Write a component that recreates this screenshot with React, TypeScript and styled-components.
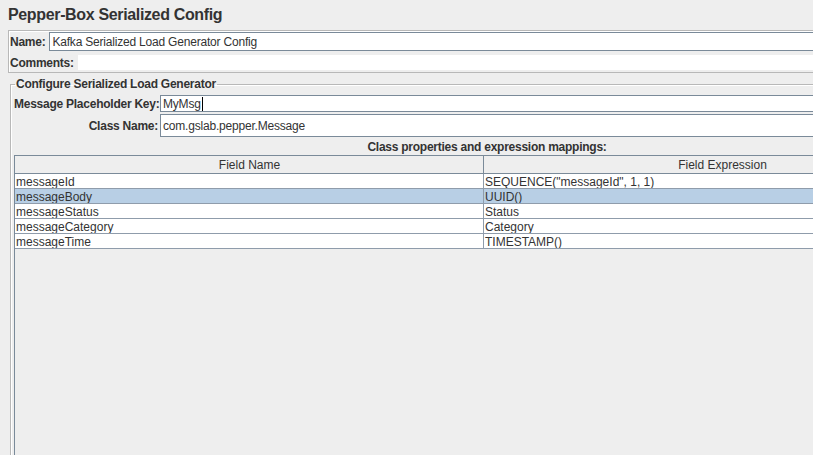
import React from "react"
import styled, { createGlobalStyle } from "styled-components"

const GlobalStyle = createGlobalStyle`
  html, body {
    margin: 0;
    padding: 0;
    background: #eeeeee;
    overflow: hidden;
  }
  body {
    font-family: "Liberation Sans", Arial, sans-serif;
    font-size: 12px;
    color: #333333;
  }
`

const Page = styled.div`
  width: 960px;
  height: 100vh;
  display: flex;
  flex-direction: column;
`

const Title = styled.div`
  height: 30px;
  padding-left: 8px;
  display: flex;
  align-items: center;
  font-size: 16px;
  font-weight: bold;
  letter-spacing: -0.35px;
  color: #333333;
`

const NamePanel = styled.div`
  margin-left: 8px;
  border: 1px solid #b8b8b8;
  box-shadow: inset 1px 1px 0 #ffffff;
  display: flex;
  flex-direction: column;
  box-sizing: border-box;
  height: 43px;
`

const FieldRow = styled.div<{ $top: number }>`
  display: flex;
  align-items: center;
  gap: 4px;
  padding-left: 1px;
  margin-top: ${(p) => p.$top}px;
`

const Label = styled.span`
  font-weight: bold;
  letter-spacing: -0.25px;
  white-space: nowrap;
`

const TextField = styled.div<{ $h: number }>`
  flex: 1;
  height: ${(p) => p.$h}px;
  box-sizing: border-box;
  background: #ffffff;
  border: 1px solid #7a8a99;
  border-right: none;
  padding-left: 2px;
  display: flex;
  align-items: center;
  letter-spacing: -0.2px;
  white-space: nowrap;
`

const CommentsArea = styled.div`
  flex: 1;
  height: 15px;
  background: #ffffff;
`

const Caret = styled.span`
  display: inline-block;
  width: 1px;
  height: 14px;
  background: #000000;
  margin-left: 1px;
`

const GroupBox = styled.fieldset`
  flex: 1;
  margin: 4px 0 0 10px;
  padding: 0 0 0 3px;
  border: 1px solid #b8b8b8;
  border-right: none;
  border-bottom: none;
  box-shadow: inset 1px 1px 0 #ffffff;
  display: flex;
  flex-direction: column;
  min-height: 0;
`

const Legend = styled.legend`
  font-weight: bold;
  letter-spacing: -0.25px;
  padding: 0 1px;
  margin-left: 1px;
  color: #333333;
`

const FormGrid = styled.div`
  display: grid;
  grid-template-columns: 144px 1fr;
  column-gap: 2px;
  row-gap: 2px;
  align-items: center;
  margin-top: 4px;
`

const FormLabel = styled(Label)`
  text-align: right;
`

const Caption = styled.div`
  height: 17px;
  display: flex;
  align-items: center;
  justify-content: center;
  font-weight: bold;
  letter-spacing: -0.25px;
  margin-top: 1px;
`

const ScrollPane = styled.div`
  flex: 1;
  border-left: 1px solid #7a8a99;
  border-top: 1px solid #7a8a99;
  display: flex;
  flex-direction: column;
`

const Row = styled.div<{ $selected?: boolean }>`
  display: grid;
  grid-template-columns: 468px 1fr;
  height: 15px;
  box-sizing: border-box;
  border-bottom: 1px solid #8f9cab;
  background: ${(p) => (p.$selected ? "#b8cfe5" : "#ffffff")};
`

const HeaderRow = styled(Row)`
  height: 18px;
  background: #eeeeee;
  border-bottom: 1px solid #7a8a99;
`

const Cell = styled.div`
  padding-left: 1px;
  line-height: 16px;
  white-space: nowrap;
  overflow: hidden;
  & + & {
    border-left: 1px solid #8f9cab;
  }
`

const HeaderCell = styled(Cell)`
  text-align: center;
  line-height: 19px;
  & + & {
    border-left: 1px solid #7a8a99;
  }
`

const mappings = [
  { name: "messageId", expr: 'SEQUENCE("messageId", 1, 1)' },
  { name: "messageBody", expr: "UUID()" },
  { name: "messageStatus", expr: "Status" },
  { name: "messageCategory", expr: "Category" },
  { name: "messageTime", expr: "TIMESTAMP()" },
]

const App: React.FC = () => {
  return (
    <>
      <GlobalStyle />
      <Page>
        <Title>Pepper-Box Serialized Config</Title>
        <NamePanel>
          <FieldRow $top={1}>
            <Label>Name:</Label>
            <TextField $h={19}>Kafka Serialized Load Generator Config</TextField>
          </FieldRow>
          <FieldRow $top={4}>
            <Label>Comments:</Label>
            <CommentsArea />
          </FieldRow>
        </NamePanel>
        <GroupBox>
          <Legend>Configure Serialized Load Generator</Legend>
          <FormGrid>
            <FormLabel>Message Placeholder Key:</FormLabel>
            <TextField $h={17}>
              MyMsg
              <Caret />
            </TextField>
            <FormLabel>Class Name:</FormLabel>
            <TextField $h={23}>com.gslab.pepper.Message</TextField>
          </FormGrid>
          <Caption>Class properties and expression mappings:</Caption>
          <ScrollPane>
            <HeaderRow>
              <HeaderCell>Field Name</HeaderCell>
              <HeaderCell>Field Expression</HeaderCell>
            </HeaderRow>
            {mappings.map((m, i) => (
              <Row key={m.name} $selected={i === 1}>
                <Cell>{m.name}</Cell>
                <Cell>{m.expr}</Cell>
              </Row>
            ))}
          </ScrollPane>
        </GroupBox>
      </Page>
    </>
  )
}

export default App
